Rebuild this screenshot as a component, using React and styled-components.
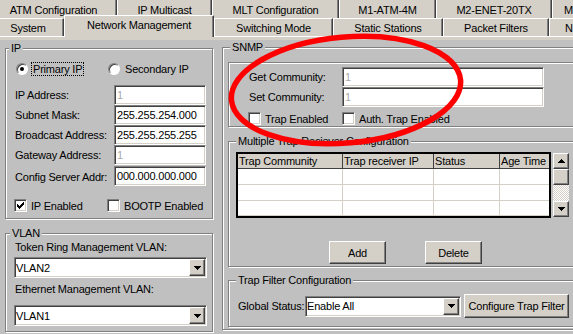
import React from 'react';
import styled, { createGlobalStyle, css } from 'styled-components';

const GlobalStyle = createGlobalStyle`
  html, body { margin: 0; padding: 0; background: #c0c0c0; }
  body {
    font-family: "Liberation Sans", Arial, sans-serif;
    font-size: 11px;
    letter-spacing: -0.2px;
    color: #000;
  }
  * { box-sizing: border-box; }
`;

/* bordes clasicos de windows */
const raised = css`
  background: #d4d0c8;
  border: 1px solid;
  border-color: #fff #404040 #404040 #fff;
  box-shadow: inset -1px -1px 0 #808080;
`;

const sunken = css`
  background: #fff;
  border: 1px solid;
  border-color: #808080 #fff #fff #808080;
  box-shadow: inset 1px 1px 0 #404040, inset -1px -1px 0 #d4d0c8;
`;

const etched = css`
  border: 1px solid #808080;
  box-shadow: 1px 1px 0 #fff, inset 1px 1px 0 #fff;
`;

const Window = styled.div`
  position: relative;
  width: 573px;
  height: 334px;
  overflow: hidden;
  background: #c0c0c0;
`;

/* pestañas */
const TabStrip = styled.div`
  display: flex;
  flex-direction: column;
  background: #d4d0c8;
`;

const TabRow = styled.div`
  display: flex;
  align-items: flex-end;
  height: ${p => (p.$back ? 20 : 18)}px;
  margin-top: ${p => (p.$back ? -2 : 0)}px;
`;

const Tab = styled.div`
  flex: 0 0 ${p => p.$w}px;
  margin-left: ${p => p.$shift || 0}px;
  height: ${p => (p.$active ? 22 : p.$back ? 20 : 18)}px;
  margin-bottom: ${p => (p.$active ? -1 : 0)}px;
  position: ${p => (p.$active ? 'relative' : 'static')};
  z-index: ${p => (p.$active ? 2 : 'auto')};
  background: #d4d0c8;
  border-left: 1px solid #fff;
  border-top: 1px solid #fff;
  border-right: 1px solid #404040;
  box-shadow: inset -1px 0 0 #808080;
  display: flex;
  align-items: center;
  justify-content: ${p => (p.$left ? 'flex-start' : 'center')};
  padding: ${p => (p.$active ? '0 0 3px' : p.$back ? '2px 0 0' : '0')};
  padding-left: ${p => p.$pad || 0}px;
  white-space: nowrap;
  overflow: hidden;
`;

const Page = styled.div`
  border-top: 1px solid #fff;
  background: #d4d0c8;
  padding-top: 3px;
  height: 298px;
`;

const Content = styled.div`
  display: flex;
  align-items: flex-start;
  gap: 9px;
  height: 100%;
  background: #c0c0c0;
  padding: 1px 0 0 5px;
`;

const LeftColumn = styled.div`
  flex: 0 0 208px;
  display: flex;
  flex-direction: column;
  margin-top: 1px;
`;

const RightColumn = styled.div`
  flex: 0 0 380px;
`;

/* cuadros de grupo */
const GroupBox = styled.fieldset`
  margin: ${p => p.$gap || 0}px 0 0;
  padding: 0;
  min-width: 0;
  width: ${p => (p.$w ? `${p.$w}px` : 'auto')};
  ${etched}
`;

const Caption = styled.legend`
  margin-left: ${p => p.$indent}px;
  padding: 0 2px;
  height: 13px;
  line-height: 13px;
  background: #c0c0c0;
`;

const Frame = styled.div`
  ${etched}
  height: 65px;
  padding: 4px 0 0 20px;
`;

/* controles */
const TextField = styled.div`
  ${sunken}
  width: ${p => p.$w}px;
  height: 20px;
  padding: 0 2px;
  display: flex;
  align-items: center;
  white-space: nowrap;
  overflow: hidden;
  color: ${p => (p.$muted ? '#a8a8a8' : '#000')};
`;

const SelectBox = styled.div`
  ${sunken}
  width: ${p => p.$w}px;
  height: 21px;
  padding: 1px;
  display: flex;
  align-items: stretch;
`;

const SelectValue = styled.span`
  flex: 1;
  display: flex;
  align-items: center;
`;

const DropButton = styled.span`
  ${raised}
  flex: 0 0 16px;
  display: flex;
  align-items: center;
  justify-content: center;
`;

const PushButton = styled.div`
  ${raised}
  width: ${p => p.$w}px;
  height: ${p => p.$h || 23}px;
  margin-left: ${p => p.$before || 0}px;
  display: flex;
  align-items: center;
  justify-content: center;
  white-space: nowrap;
`;

const Check = styled.span`
  ${sunken}
  flex: 0 0 13px;
  width: 13px;
  height: 13px;
  display: inline-flex;
  align-items: center;
  justify-content: center;
`;

const Radio = styled.span`
  flex: 0 0 12px;
  width: 12px;
  height: 12px;
  border-radius: 50%;
  background: #fff;
  border: 1px solid;
  border-color: #808080 #fff #fff #808080;
  box-shadow: inset 1px 1px 0 #404040;
  display: inline-flex;
  align-items: center;
  justify-content: center;
  &::after {
    content: '';
    display: ${p => (p.$on ? 'block' : 'none')};
    width: 4px;
    height: 4px;
    border-radius: 50%;
    background: #000;
  }
`;

const Option = styled.label`
  display: flex;
  align-items: center;
  gap: 4px;
  white-space: nowrap;
`;

const OptionText = styled.span`
  padding: 0 1px;
  line-height: 12px;
  outline: ${p => (p.$focus ? '1px dotted #000' : 'none')};
  outline-offset: 0;
`;

/* panel IP */
const IpBody = styled.div`
  padding: 7px 0 6px 9px;
`;

const RadioRow = styled.div`
  display: grid;
  grid-template-columns: 92px auto;
  height: 14px;
  align-items: center;
  margin-left: 1px;
`;

const FieldGrid = styled.div`
  display: grid;
  grid-template-columns: ${p => p.$cols};
  grid-auto-rows: 20px;
  align-items: center;
  margin-top: ${p => p.$top || 0}px;
`;

const FieldLabel = styled.span`
  white-space: nowrap;
  margin-top: ${p => p.$nudge || 0}px;
`;

const CheckRow = styled.div`
  display: grid;
  grid-template-columns: ${p => p.$cols};
  height: 13px;
  align-items: center;
  margin: ${p => p.$top}px 0 0 -1px;
`;

/* panel VLAN */
const VlanBody = styled.div`
  padding: 1px 0 5px 8px;
`;

const VlanLabel = styled.div`
  height: 13px;
  line-height: 13px;
  margin: ${p => p.$top || 0}px 0 0 1px;
  white-space: nowrap;
`;

const Spaced = styled.div`
  margin-top: ${p => p.$top}px;
`;

/* panel SNMP */
const SnmpBody = styled.div`
  padding: 8px 0 2px 5px;
`;

const TrapBody = styled.div`
  padding: 4px 0 2px 7px;
`;

const TableArea = styled.div`
  display: flex;
  align-items: flex-start;
  gap: 2px;
`;

const Table = styled.div`
  width: 315px;
  height: 66px;
  border: 2px solid #000;
  background: #fff;
  display: grid;
  grid-template-columns: 105px 91px 66px 49px;
  grid-template-rows: 15px 16px 16px 15px;
  overflow: hidden;
`;

const HeadCell = styled.div`
  background: #d4d0c8;
  border-right: ${p => (p.$last ? 'none' : '1px solid #404040')};
  border-bottom: 1px solid #404040;
  padding-left: 1px;
  line-height: 14px;
  white-space: nowrap;
  overflow: hidden;
`;

const Cell = styled.div`
  border-right: ${p => (p.$last ? 'none' : '1px solid #d4d0c8')};
  border-bottom: 1px solid #d4d0c8;
`;

const ScrollBar = styled.div`
  width: 16px;
  height: 64px;
  margin-top: 1px;
  display: grid;
  grid-template-rows: 16px 16px 1fr 16px;
`;

const ScrollButton = styled.div`
  ${raised}
  display: flex;
  align-items: center;
  justify-content: center;
`;

const ScrollTrack = styled.div`
  background: repeating-conic-gradient(#fff 0 25%, #d4d0c8 0 50%) 0 0 / 2px 2px;
`;

const ButtonRow = styled.div`
  display: flex;
  gap: 39px;
  margin-top: 23px;
  padding-left: 93px;
`;

const FilterBody = styled.div`
  padding: 7px 0 8px 9px;
  display: flex;
  align-items: center;
`;

const FilterLabel = styled.span`
  flex: 0 0 67px;
  white-space: nowrap;
`;

const Annotation = styled.svg`
  position: absolute;
  left: 0;
  top: 0;
  pointer-events: none;
`;

const ArrowDown = () => (
  <svg width="7" height="4" viewBox="0 0 7 4" shapeRendering="crispEdges">
    <path d="M0 0h7v1H0zM1 1h5v1H1zM2 2h3v1H2zM3 3h1v1H3z" fill="#000" />
  </svg>
);

const ArrowUp = () => (
  <svg width="7" height="4" viewBox="0 0 7 4" shapeRendering="crispEdges">
    <path d="M3 0h1v1H3zM2 1h3v1H2zM1 2h5v1H1zM0 3h7v1H0z" fill="#000" />
  </svg>
);

const CheckMark = () => (
  <svg width="7" height="7" viewBox="0 0 7 7" shapeRendering="crispEdges">
    <path
      d="M6 0h1v1H6zM5 1h2v1H5zM0 2h1v1H0zM4 2h3v1H4zM0 3h2v1H0zM3 3h3v1H3zM0 4h5v1H0zM1 5h3v1H1zM2 6h1v1H2z"
      fill="#000"
    />
  </svg>
);

const Dropdown = ({ w, value }) => (
  <SelectBox $w={w}>
    <SelectValue>{value}</SelectValue>
    <DropButton><ArrowDown /></DropButton>
  </SelectBox>
);

const backTabs = [
  { label: 'ATM Configuration', w: 127, shift: -10 },
  { label: 'IP Multicast', w: 95 },
  { label: 'MLT Configuration', w: 127 },
  { label: 'M1-ATM-4M', w: 97 },
  { label: 'M2-ENET-20TX', w: 116 },
  { label: 'M', w: 40, left: true, pad: 11 },
];

const frontTabs = [
  { label: 'System', w: 72, shift: -8 },
  { label: 'Network Management', w: 150, active: true },
  { label: 'Switching Mode', w: 119 },
  { label: 'Static Stations', w: 110 },
  { label: 'Packet Filters', w: 106 },
  { label: 'N', w: 40, left: true, pad: 15 },
];

const ipFields = [
  { label: 'IP Address:', value: '1', muted: true },
  { label: 'Subnet Mask:', value: '255.255.254.000' },
  { label: 'Broadcast Address:', value: '255.255.255.255' },
  { label: 'Gateway Address:', value: '1', muted: true },
];

const trapColumns = ['Trap Community', 'Trap receiver IP', 'Status', 'Age Time'];

function App() {
  return (
    <>
      <GlobalStyle />
      <Window>
        <TabStrip>
          <TabRow $back>
            {backTabs.map(t => (
              <Tab key={t.label} $back $w={t.w} $shift={t.shift} $left={t.left} $pad={t.pad}>
                {t.label}
              </Tab>
            ))}
          </TabRow>
          <TabRow>
            {frontTabs.map(t => (
              <Tab key={t.label} $w={t.w} $shift={t.shift} $active={t.active} $left={t.left} $pad={t.pad}>
                {t.label}
              </Tab>
            ))}
          </TabRow>
        </TabStrip>

        <Page>
          <Content>
            <LeftColumn>
              <GroupBox>
                <Caption $indent={3}>IP</Caption>
                <IpBody>
                  <RadioRow>
                    <Option>
                      <Radio $on />
                      <OptionText $focus>Primary IP</OptionText>
                    </Option>
                    <Option>
                      <Radio />
                      <OptionText>Secondary IP</OptionText>
                    </Option>
                  </RadioRow>
                  <FieldGrid $cols="99px 92px" $top={9}>
                    {ipFields.map(f => (
                      <React.Fragment key={f.label}>
                        <FieldLabel>{f.label}</FieldLabel>
                        <TextField $w={92} $muted={f.muted}>{f.value}</TextField>
                      </React.Fragment>
                    ))}
                  </FieldGrid>
                  <FieldGrid $cols="99px 92px" $top={1}>
                    <FieldLabel $nudge={2}>Config Server Addr:</FieldLabel>
                    <TextField $w={92}>000.000.000.000</TextField>
                  </FieldGrid>
                  <CheckRow $cols="93px auto" $top={13}>
                    <Option>
                      <Check><CheckMark /></Check>
                      <span>IP Enabled</span>
                    </Option>
                    <Option>
                      <Check />
                      <span>BOOTP Enabled</span>
                    </Option>
                  </CheckRow>
                </IpBody>
              </GroupBox>

              <GroupBox $gap={8}>
                <Caption $indent={4}>VLAN</Caption>
                <VlanBody>
                  <VlanLabel>Token Ring Management VLAN:</VlanLabel>
                  <Spaced $top={3}>
                    <Dropdown w={193} value="VLAN2" />
                  </Spaced>
                  <VlanLabel $top={5}>Ethernet Management VLAN:</VlanLabel>
                  <Spaced $top={9}>
                    <Dropdown w={193} value="VLAN1" />
                  </Spaced>
                </VlanBody>
              </GroupBox>
            </LeftColumn>

            <RightColumn>
              <GroupBox $w={380}>
                <Caption $indent={7}>SNMP</Caption>
                <SnmpBody>
                  <Frame>
                    <FieldGrid $cols="93px 202px">
                      <FieldLabel>Get Community:</FieldLabel>
                      <TextField $w={202} $muted>1</TextField>
                      <FieldLabel>Set Community:</FieldLabel>
                      <TextField $w={202} $muted>1</TextField>
                    </FieldGrid>
                    <CheckRow $cols="94px auto" $top={5}>
                      <Option>
                        <Check />
                        <span>Trap Enabled</span>
                      </Option>
                      <Option>
                        <Check />
                        <span>Auth. Trap Enabled</span>
                      </Option>
                    </CheckRow>
                  </Frame>

                  <GroupBox $gap={8}>
                    <Caption $indent={7}>Multiple Trap Reciever Configuration</Caption>
                    <TrapBody>
                      <TableArea>
                        <Table>
                          {trapColumns.map((c, i) => (
                            <HeadCell key={c} $last={i === 3}>{c}</HeadCell>
                          ))}
                          {[0, 1, 2].map(r =>
                            trapColumns.map((c, i) => <Cell key={`${r}-${c}`} $last={i === 3} />)
                          )}
                        </Table>
                        <ScrollBar>
                          <ScrollButton><ArrowUp /></ScrollButton>
                          <ScrollButton />
                          <ScrollTrack />
                          <ScrollButton><ArrowDown /></ScrollButton>
                        </ScrollBar>
                      </TableArea>
                      <ButtonRow>
                        <PushButton $w={57}>Add</PushButton>
                        <PushButton $w={57}>Delete</PushButton>
                      </ButtonRow>
                    </TrapBody>
                  </GroupBox>

                  <GroupBox $gap={7}>
                    <Caption $indent={7}>Trap Filter Configuration</Caption>
                    <FilterBody>
                      <FilterLabel>Global Status:</FilterLabel>
                      <Dropdown w={156} value="Enable All" />
                      <PushButton $w={105} $h={24} $before={3}>Configure Trap Filter</PushButton>
                    </FilterBody>
                  </GroupBox>
                </SnmpBody>
              </GroupBox>
            </RightColumn>
          </Content>
        </Page>

        <Annotation width="573" height="334" viewBox="0 0 573 334">
          <ellipse
            cx="346"
            cy="90"
            rx="115"
            ry="53"
            transform="rotate(-5 346 90)"
            fill="none"
            stroke="#f00"
            strokeWidth="5.5"
          />
        </Annotation>
      </Window>
    </>
  );
}

export default App;
